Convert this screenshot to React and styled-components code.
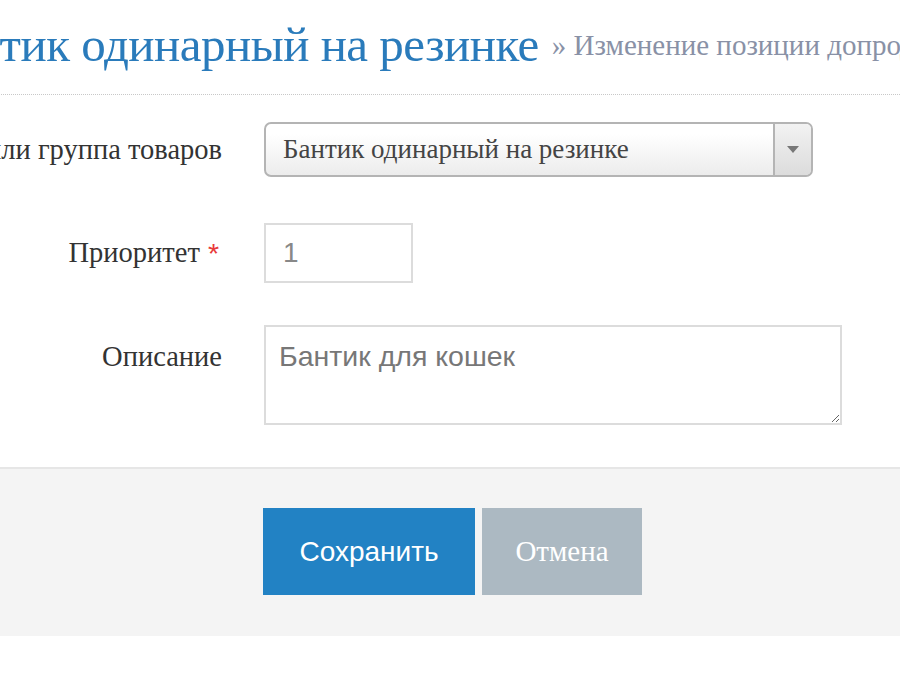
import React from "react";
import styled, { createGlobalStyle } from "styled-components";

const Global = createGlobalStyle`
  html, body { margin: 0; padding: 0; background: #fff; overflow: hidden; }
  body { width: 900px; height: 700px; }
`;

const Page = styled.div`
  width: 900px;
  height: 700px;
  overflow: hidden;
  font-family: "Liberation Serif", "Times New Roman", serif;
`;

const Header = styled.div`
  display: flex;
  align-items: baseline;
  white-space: nowrap;
  gap: 13px;
  height: 95px;
  box-sizing: border-box;
  padding-top: 16px;
  margin-left: -${(p) => p.$cut}px;
  border-bottom: 1px dotted #c8c8c8;
`;

const Title = styled.h1`
  margin: 0;
  font-family: "Liberation Serif", "Times New Roman", serif;
  font-weight: normal;
  font-size: 49px;
  color: #2a7bbb;
  letter-spacing: -0.5px;
`;

const Subtitle = styled.span`
  font-size: 29px;
  color: #8991a6;
  position: relative;
  top: -6px;
`;

const Form = styled.div`
  display: flex;
  flex-direction: column;
  padding-top: 27px;
`;

const Row = styled.div`
  display: flex;
  align-items: ${(p) => (p.$top ? "flex-start" : "center")};
  gap: 42px;
  margin-bottom: ${(p) => p.$mb}px;
`;

const Label = styled.div`
  width: 222px;
  flex: none;
  display: flex;
  justify-content: flex-end;
  white-space: nowrap;
  font-size: 28.5px;
  color: #333;
  padding-top: ${(p) => p.$pt || 0}px;
`;

const Star = styled.span`
  color: #e83a3a;
  margin-left: 8px;
  margin-right: 3px;
  font-family: "Liberation Sans", Arial, sans-serif;
`;

const Select = styled.div`
  width: 549px;
  height: 55px;
  box-sizing: border-box;
  border: 2px solid #b4b4b4;
  border-radius: 7px;
  background: linear-gradient(#ffffff 20%, #ececec 100%);
  display: flex;
  align-items: stretch;
  overflow: hidden;
`;

const SelectText = styled.div`
  flex: 1;
  display: flex;
  align-items: center;
  padding-left: 17px;
  font-size: 27px;
  color: #444;
  white-space: nowrap;
`;

const SelectArrow = styled.div`
  width: 36px;
  flex: none;
  border-left: 2px solid #b4b4b4;
  background: linear-gradient(#f2f2f2, #dcdcdc);
  display: flex;
  align-items: center;
  justify-content: center;
`;

const Input = styled.div`
  width: 149px;
  height: 60px;
  box-sizing: border-box;
  border: 2px solid #dcdcdc;
  display: flex;
  align-items: center;
  padding-left: 17px;
  font-family: "Liberation Sans", Arial, sans-serif;
  font-size: 28px;
  color: #888;
`;

const TextArea = styled.textarea`
  width: 578px;
  height: 100px;
  box-sizing: border-box;
  border: 2px solid #dcdcdc;
  padding: 13px 13px;
  margin: 0;
  font-family: "Liberation Sans", Arial, sans-serif;
  font-size: 28.5px;
  color: #777;
  resize: both;
  outline: none;
`;

const Footer = styled.div`
  border-top: 2px solid #e6e6e6;
  background: #f4f4f4;
  height: 169px;
  box-sizing: border-box;
  padding: 39px 0 0 263px;
  display: flex;
  align-items: flex-start;
  gap: 7px;
`;

const Button = styled.button`
  height: 87px;
  width: ${(p) => p.$w}px;
  border: none;
  margin: 0;
  background: ${(p) => p.$bg};
  color: #fff;
  font-size: ${(p) => (p.$serif ? 29 : 28)}px;
  font-family: ${(p) =>
    p.$serif
      ? '"Liberation Serif", "Times New Roman", serif'
      : '"Liberation Sans", Arial, sans-serif'};
  cursor: pointer;
`;

export default function App() {
  return (
    <Page>
      <Global />
      <Header $cut={75}>
        <Title>Бантик одинарный на резинке</Title>
        <Subtitle>» Изменение позиции допродажи</Subtitle>
      </Header>
      <Form>
        <Row $mb={46}>
          <Label>Товар или группа товаров</Label>
          <Select>
            <SelectText>Бантик одинарный на резинке</SelectText>
            <SelectArrow>
              <svg width="12" height="8" viewBox="0 0 12 8">
                <path d="M0 0 H12 L6 7 Z" fill="#777" />
              </svg>
            </SelectArrow>
          </Select>
        </Row>
        <Row $mb={42}>
          <Label>
            Приоритет<Star>*</Star>
          </Label>
          <Input>1</Input>
        </Row>
        <Row $mb={42} $top>
          <Label $pt={16}>Описание</Label>
          <TextArea defaultValue="Бантик для кошек" />
        </Row>
      </Form>
      <Footer>
        <Button $w={212} $bg="#2282c4">Сохранить</Button>
        <Button $w={160} $bg="#acb9c2" $serif>
          Отмена
        </Button>
      </Footer>
    </Page>
  );
}
